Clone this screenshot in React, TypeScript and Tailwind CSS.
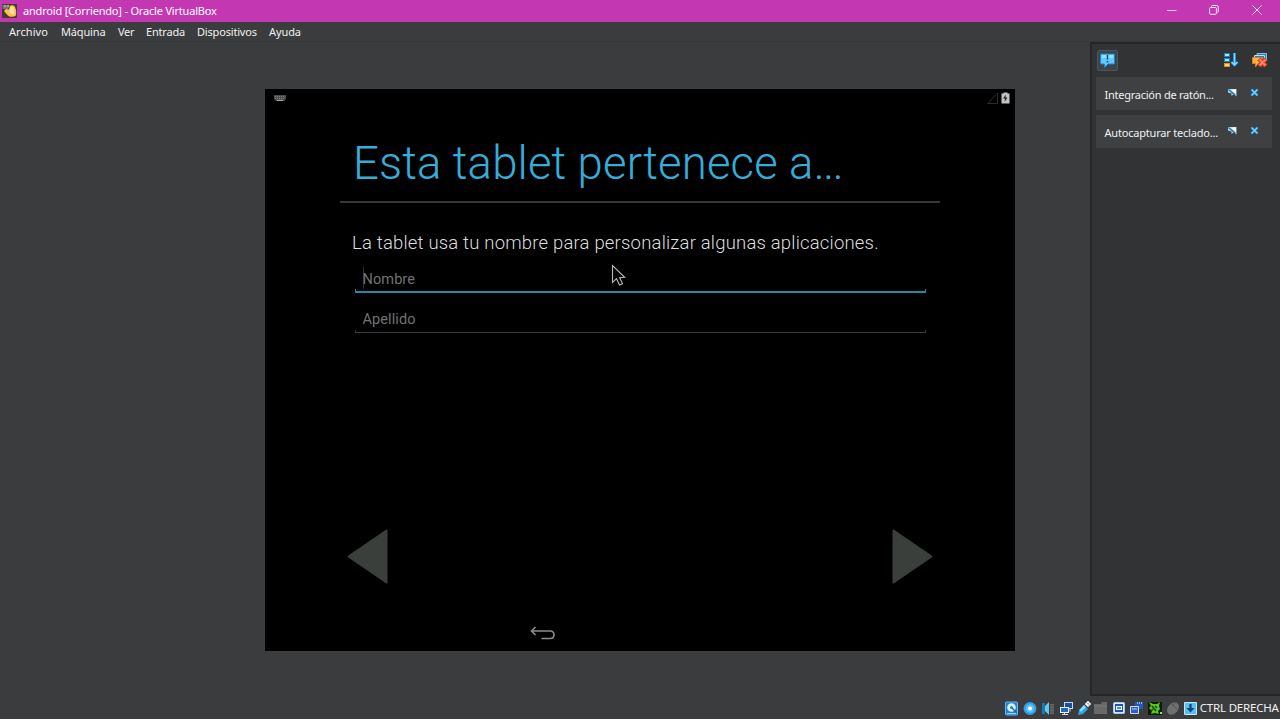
import type { ReactNode } from "react";

function Icon({ children, w = 16, h = 16, className = "" }: { children: ReactNode; w?: number; h?: number; className?: string }) {
  return (
    <svg width={w} height={h} viewBox={`0 0 ${w} ${h}`} className={`shrink-0 ${className}`}>
      {children}
    </svg>
  );
}

function TitleBar() {
  return (
    <header className="flex h-[22px] items-center bg-[#c437b2] pl-[2px] text-white">
      <Icon className="-mt-px">
        <rect x="0" y="1" width="15" height="14" fill="#4a3a2c" />
        <path d="M0 2h8l-2 4H1z" fill="#77777a" />
        <path d="M2 3h2m1 0h2" stroke="#ccc" />
        <path d="M2 8l2-2 3 .5L8 3c2-1.500 4-1 5 1 1.500 3 1.500 7 .5 9-3 1.500-7 1-9-2z" fill="#f7c252" />
        <path d="M8.500 4c2-1 3 0 3.500 2l.5 5c-3 1-5-1-5-3z" fill="#ffdf92" />
      </Icon>
      <h1 className="ml-[5px] grow text-[11px] leading-[22px] tracking-[-0.19px] whitespace-nowrap">
        android [Corriendo] - Oracle VirtualBox
      </h1>
      <Icon w={10} h={10} className="mr-[32px] -mt-[2px]">
        <path d="M0 5.500h9.500" stroke="#f3d2ef" />
      </Icon>
      <Icon w={10} h={10} className="mr-[33px] -mt-[3px]">
        <rect x=".6" y="2.500" width="6.800" height="6.800" rx="1" fill="none" stroke="#fbe9f9" />
        <path d="M2.500 2V1.500q0-1 1-1h4q1.800 0 1.800 1.800v4q0 1-1 1H8" fill="none" stroke="#fbe9f9" />
      </Icon>
      <Icon w={10} h={10} className="mr-[18px] -mt-[3px]">
        <path d="M.5.500l9 9m0-9l-9 9" stroke="#fbe9f9" />
      </Icon>
    </header>
  );
}

function MenuBar() {
  return (
    <nav className="flex h-[20px] border-b border-[#353637] pl-[9px] text-[11px] leading-[19px] whitespace-nowrap text-[#f0f0f0]">
      <span className="w-[52px] tracking-[0.05px]">Archivo</span>
      <span className="w-[57px] tracking-[-0.15px]">Máquina</span>
      <span className="w-[28px] tracking-[-0.3px]">Ver</span>
      <span className="w-[51px] tracking-[-0.2px]">Entrada</span>
      <span className="w-[72px] tracking-[-0.18px]">Dispositivos</span>
      <span className="tracking-[-0.1px]">Ayuda</span>
    </nav>
  );
}

function Field({ label, focused = false }: { label: string; focused?: boolean }) {
  return (
    <div className="flex h-[28px] w-[571px] flex-col justify-between">
      <div className="flex h-[24px] items-end pl-[8px]">
        {focused && <span className="-mr-px h-[22px] w-px bg-[#303030]" />}
        <span className="text-[14.5px] leading-[19px] tracking-[0.1px] text-[#727272]">{label}</span>
      </div>
      {focused ? (
        <div className="h-[4px] shrink-0 border-x border-b-2 border-[#2586a8]" />
      ) : (
        <div className="mb-[0.5px] h-[3px] shrink-0 border-x border-b border-[#3a3a3a]" />
      )}
    </div>
  );
}

function Tablet() {
  return (
    <main className="relative h-[562px] w-[750px] shrink-0 bg-black font-[Roboto,sans-serif]">
      <div className="flex h-[17px] items-center justify-between pr-[5px] pl-[9px]">
        <Icon w={12} h={8} className="mt-px">
          <path d="M0 1h12v4l-2 2H2L0 5z" fill="#4c4c4c" />
          <path d="M1 2.500h10M1 4.500h10" stroke="#858585" strokeDasharray="1 1" />
          <path d="M3 6.500h6" stroke="#aaa" />
        </Icon>
        <div className="flex items-center gap-[3px]">
          <Icon w={11} h={12}>
            <path d="M.5 11.500L10.500 1v10.500z" fill="none" stroke="#2b2b2b" />
          </Icon>
          <Icon w={9} h={12}>
            <path d="M.5 1.500h2V.5h4v1h2v10h-8z" fill="#c4c4c4" />
            <path d="M5 2.500l-3 4h2l-.5 3.500 3-4.500h-2z" fill="#222" />
          </Icon>
        </div>
      </div>
      <section className="pt-px pl-[75px]">
        <h2 className="h-[96px] w-[600px] border-b-2 border-[#363636] pt-[28px] pl-[13px] text-[45.5px] leading-[58px] font-light tracking-[0.15px] whitespace-nowrap text-[#35add9]">
          Esta tablet pertenece a<span className="tracking-[-1.4px]">...</span>
        </h2>
        <p className="pt-[28px] pl-[12px] text-[18.5px] leading-[24px] font-light tracking-[0.19px] whitespace-nowrap text-[#dedede]">
          La tablet usa tu nombre para personalizar algunas aplicaciones.
        </p>
        <div className="flex flex-col gap-[12px] pt-[10px] pl-[14.5px]">
          <Field label="Nombre" focused />
          <Field label="Apellido" />
        </div>
      </section>
      <div className="mt-[196px] flex justify-between px-[82px]">
        <Icon w={41} h={55}>
          <path d="M39.500 1.500v52L1.500 27.500z" fill="#3b3f3c" stroke="#3b3f3c" strokeWidth="2" strokeLinejoin="round" />
        </Icon>
        <Icon w={41} h={55}>
          <path d="M1.500 1.500v52L39.500 27.500z" fill="#3b3f3c" stroke="#3b3f3c" strokeWidth="2" strokeLinejoin="round" />
        </Icon>
      </div>
      <div className="pt-[42px] pl-[265px]">
        <Icon w={26} h={15}>
          <path d="M5.500 1L1.500 5l4 4M1.500 5H20q4 0 4 3.800T20 12.500H11.500" fill="none" stroke="#8c8c8c" strokeWidth="1.600" />
        </Icon>
      </div>
      <svg className="absolute top-[175px] left-[346px]" width="16" height="24" viewBox="0 0 16 24">
        <path d="M1.500 1.500v17l4-3.800 3 6.300 3-1.300-2.800-6 5-.4z" fill="#050505" stroke="#b8b8b8" strokeWidth="1.100" />
      </svg>
    </main>
  );
}

function Notification({ text, tracking }: { text: string; tracking: string }) {
  return (
    <li className="flex h-[33px] w-[176px] items-center bg-[#3f4042] pl-[8.5px] text-[11px] text-[#f0f0f0]">
      <span className={`mt-[3px] w-[122px] whitespace-nowrap ${tracking}`}>{text}</span>
      <Icon w={11} h={10} className="-mt-[2px]">
        <path d="M1 1h8.500v7.500L7 6 4.500 8V5.500L1 4.500z" fill="#a9daf2" />
        <path d="M1.500 1.500L8 7" stroke="#286f9a" strokeWidth="1.200" />
        <path d="M4 1.500h5V6z" fill="#fff" />
      </Icon>
      <Icon w={9} h={9} className="-mt-[2px] ml-[12.5px]">
        <path d="M1.500 1.500l6 6m0-6l-6 6" stroke="#1670b0" strokeWidth="3" />
        <path d="M1.500 1.500l6 6m0-6l-6 6" stroke="#79d2ff" strokeWidth="1.500" />
      </Icon>
    </li>
  );
}

function NotificationCenter() {
  return (
    <aside className="h-[654px] w-[190px] shrink-0 border-t-2 border-b-2 border-l-2 border-[#252627] bg-[#323335] pl-[4px]">
      <div className="flex h-[33px] items-center pb-px pl-px">
        <span className="flex size-[21px] items-center justify-center rounded-[2px] border border-[#4c565e] bg-[#3d4348]">
          <Icon w={15} h={15}>
            <path d="M.5 1h14v10H8l-3.500 3.500V11h-4z" fill="#5fcaff" stroke="#1883cf" />
            <path d="M2 2h11v3H2z" fill="#94e0ff" />
            <path d="M7.500 2v4.500m0 1.500v1.500" stroke="#174465" strokeWidth="1.500" />
          </Icon>
        </span>
        <Icon className="ml-[105px]">
          <path d="M1 1h6v4H1zM1 6h6v4H1z" fill="#1681ca" />
          <path d="M2 2h4v2H2zM2 7h4v2H2z" fill="#a9e5ff" />
          <path d="M1 11h6v4H1z" fill="#e98b20" />
          <path d="M2 12h4v2H2z" fill="#ffd36d" />
          <path d="M11.500 1v12M8.500 10l3 3 3-3" fill="none" stroke="#1780d2" strokeWidth="3" />
          <path d="M11.500 1v12M8.500 10l3 3 3-3" fill="none" stroke="#83d8ff" strokeWidth="1.400" />
        </Icon>
        <Icon className="ml-[13px]">
          <path d="M5 1.500h9.500V8H5z" fill="#287ebc" stroke="#79c4ee" />
          <path d="M2.500 3.500h10V9h-10z" fill="#287ebc" stroke="#b8e2f8" />
          <path d="M.5 5.500h10v6H6L3.500 15v-3.500h-3z" fill="#ffb637" stroke="#e8761d" />
          <path d="M7 7l7 7m0-7l-7 7" stroke="#d23c22" strokeWidth="4.500" />
          <path d="M7.500 7.500l6 6m0-6l-6 6" stroke="#ff7d62" strokeWidth="2.200" />
        </Icon>
      </div>
      <ul className="flex flex-col gap-[5px]">
        <Notification text="Integración de ratón..." tracking="tracking-[-0.25px]" />
        <Notification text="Autocapturar teclado..." tracking="tracking-[-0.2px]" />
      </ul>
    </aside>
  );
}

function StatusBar() {
  return (
    <footer className="flex h-[22px] items-center gap-[1.9px] pl-[1003px] text-[#f0f0f0]">
      <Icon>
        <rect x="2.500" y="2" width="12" height="13" rx="1" fill="#2381d0" stroke="#5cb8ef" />
        <circle cx="8.500" cy="7.500" r="4.300" fill="#d9effb" />
        <circle cx="8.500" cy="7.500" r="1.500" fill="#347fb9" />
        <path d="M9 8l4 4" stroke="#1a609c" strokeWidth="1.300" />
        <path d="M4 13.500h9" stroke="#8ed2f8" />
      </Icon>
      <Icon className="ml-px">
        <circle cx="8" cy="8.500" r="6.500" fill="#2f9fe8" />
        <circle cx="8" cy="8.500" r="4.300" fill="#5bbff5" />
        <circle cx="8" cy="8.500" r="2" fill="#f2fcff" />
      </Icon>
      <Icon>
        <path d="M2 3h3v11H2z" fill="#1679bc" />
        <path d="M5 6l4-4v13l-4-4z" fill="#65c7f6" />
        <path d="M10 4h4v10h-4z" fill="#666" />
        <path d="M10 6h4m-4 3h4m-4 3h4" stroke="#4d4d4d" />
      </Icon>
      <Icon>
        <rect x="6.500" y="2.500" width="8" height="6" fill="#1d4ba4" stroke="#b5dfff" />
        <path d="M12 9v2.500" stroke="#ccc" />
        <rect x="2.500" y="7.500" width="8" height="5" fill="#2465bf" stroke="#e1f2ff" />
        <path d="M4 14.500h6M6.500 13v2" stroke="#ddd" />
      </Icon>
      <Icon>
        <path d="M2 15l1-5 5-5 4 4-5 5z" fill="#2fa5e9" />
        <path d="M3.500 10L8 5l2 2-5 5z" fill="#8cdcff" />
        <path d="M9 4l3-3 3 3-3 3z" fill="#eef7ff" stroke="#b2c4d4" />
        <path d="M11.500 3.500h1m0 1.500h1" stroke="#4b6578" />
      </Icon>
      <Icon>
        <path d="M1 4h7l1-2h5v12H1z" fill="#696969" />
        <path d="M1 6h13" stroke="#7b7b7b" />
      </Icon>
      <Icon>
        <rect x="2.500" y="2.500" width="11" height="11" rx="1" fill="#dceaff" stroke="#a8c8f4" />
        <rect x="4" y="4" width="8" height="8" fill="#1b54b1" />
        <rect x="5.500" y="6.500" width="5" height="3" fill="#3f8bdd" stroke="#eff7ff" />
      </Icon>
      <Icon>
        <path d="M6 2h8v7H6z" fill="#2858b8" />
        <path d="M8.500 2v2m2-2v2m2-2v2" stroke="#87b6ee" />
        <path d="M1.500 6.500h8v7h-8z" fill="#2c5fc0" stroke="#c9defa" />
        <path d="M3 8h5v2H3z" fill="#6f9be6" />
      </Icon>
      <Icon>
        <path d="M1 2h14v13H1z" fill="#0a1c08" />
        <path d="M2 2l4 2h4l3-2-1 4 1 3-2 2 1 3-4-1-4 1 1-3-3-3 2-2z" fill="#5cc425" />
        <path d="M5 6l4 5m-1-5l2 2M4 11l2-2" stroke="#164b13" strokeWidth="1.400" />
        <path d="M13 12h2v2h-2z" fill="#80f52d" />
      </Icon>
      <Icon>
        <ellipse cx="8" cy="8.500" rx="5" ry="7" fill="#707070" transform="rotate(40 8 8.500)" />
        <path d="M6 4l6 5M10 3L8 6" stroke="#555" />
      </Icon>
      <Icon>
        <rect x="1" y="2" width="13" height="13" rx="1" fill="#b9e9ff" />
        <rect x="2" y="3" width="11" height="11" fill="#5bbdf0" />
        <path d="M7.500 4v5" stroke="#064677" strokeWidth="2.200" />
        <path d="M3.500 8h8l-4 4.500z" fill="#064677" />
      </Icon>
      <span className="-ml-px text-[11.5px] tracking-[-0.2px] whitespace-nowrap">CTRL DERECHA</span>
    </footer>
  );
}

export default function App() {
  return (
    <div className="flex h-[719px] w-[1280px] flex-col overflow-hidden bg-[#3b3c3e] font-['Noto_Sans','Open_Sans',sans-serif]">
      <TitleBar />
      <MenuBar />
      <div className="flex h-[655px] shrink-0">
        <div className="flex w-[1090px] shrink-0 justify-end pt-[47px] pr-[75px]">
          <Tablet />
        </div>
        <NotificationCenter />
      </div>
      <StatusBar />
    </div>
  );
}
